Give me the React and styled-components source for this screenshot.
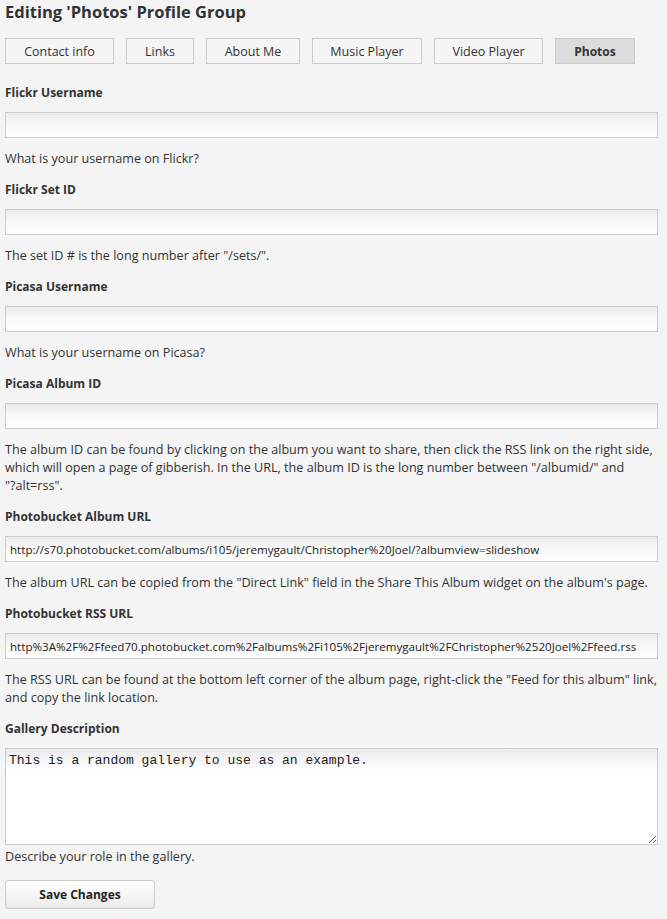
import React from "react";
import styled, { createGlobalStyle } from "styled-components";

const Global = createGlobalStyle`
  html, body { margin: 0; padding: 0; background: #f4f4f4; }
  body { font-family: "Open Sans", "Noto Sans", sans-serif; color: #333; }
`;

const Page = styled.div`
  padding: 2px 9px 20px 5px;
  display: flex;
  flex-direction: column;
`;

const Title = styled.h1`
  margin: 0;
  font-size: 16.5px;
  line-height: 20px;
  font-weight: 700;
  color: #333;
`;

const Tabs = styled.div`
  display: flex;
  gap: 12px;
  margin-top: 16px;
`;

const Tab = styled.button`
  box-sizing: border-box;
  height: 26px;
  padding: 0;
  width: ${(p) => p.$w}px;
  border: 1px solid #cccccc;
  background: ${(p) => (p.$active ? "#dcdcdc" : "#f5f5f5")};
  font-family: inherit;
  font-size: ${(p) => (p.$active ? 12 : 12.5)}px;
  font-weight: ${(p) => (p.$active ? 700 : 400)};
  color: #333;
`;

const Field = styled.div`
  display: flex;
  flex-direction: column;
  margin-top: ${(p) => p.$top}px;
`;

const Label = styled.label`
  font-size: 12px;
  font-weight: 700;
  line-height: 18px;
  margin-bottom: 10px;
`;

const Input = styled.input`
  box-sizing: border-box;
  height: 26px;
  width: 100%;
  margin: 0;
  border: 1px solid #cccccc;
  background: linear-gradient(#ebebeb, #f8f8f8 45%, #ffffff);
  padding: 0 4px;
  font-family: inherit;
  font-size: 11.6px;
  color: #222;
  outline: none;
`;

const TextArea = styled.textarea`
  box-sizing: border-box;
  height: 97px;
  width: 100%;
  margin: 0;
  border: 1px solid #cccccc;
  background: linear-gradient(#ebebeb, #ffffff 22px);
  padding: 4px 3px;
  font-family: "Liberation Mono", "DejaVu Sans Mono", monospace;
  font-size: 13px;
  line-height: 16px;
  color: #222;
  resize: vertical;
  outline: none;
  display: block;
`;

const Help = styled.p`
  margin: ${(p) => p.$top ?? 12}px 0 0;
  font-size: 12.6px;
  line-height: 18px;
  color: #333;
`;

const NoWrap = styled.span`
  white-space: nowrap;
`;

const Save = styled.button`
  box-sizing: border-box;
  margin-top: 14px;
  width: 150px;
  height: 29px;
  border: 1px solid #cccccc;
  border-radius: 3px;
  background: linear-gradient(#ffffff, #ebebeb);
  font-family: inherit;
  font-size: 12px;
  font-weight: 700;
  color: #222;
  align-self: flex-start;
`;

const tabs = [
  ["Contact info", 109],
  ["Links", 68],
  ["About Me", 94],
  ["Music Player", 110],
  ["Video Player", 109],
  ["Photos", 80, true],
];

const fields = [
  { label: "Flickr Username", help: "What is your username on Flickr?" },
  { label: "Flickr Set ID", help: 'The set ID # is the long number after "/sets/".' },
  { label: "Picasa Username", help: "What is your username on Picasa?" },
  {
    label: "Picasa Album ID",
    help: (
      <>
        The album ID can be found by clicking on the album you want to share, then click the RSS link on the right
        side, which will open a page of gibberish. In the URL, the album ID is the long number between "/albumid/" and{" "}
        <NoWrap>"?alt=rss".</NoWrap>
      </>
    ),
  },
  {
    label: "Photobucket Album URL",
    value: "http://s70.photobucket.com/albums/i105/jeremygault/Christopher%20Joel/?albumview=slideshow",
    help: 'The album URL can be copied from the "Direct Link" field in the Share This Album widget on the album\'s page.',
  },
  {
    label: "Photobucket RSS URL",
    value: "http%3A%2F%2Ffeed70.photobucket.com%2Falbums%2Fi105%2Fjeremygault%2FChristopher%2520Joel%2Ffeed.rss",
    help: 'The RSS URL can be found at the bottom left corner of the album page, right-click the "Feed for this album" link, and copy the link location.',
  },
];

export default function App() {
  return (
    <>
      <Global />
      <Page>
        <Title>Editing 'Photos' Profile Group</Title>
        <Tabs>
          {tabs.map(([t, w, a]) => (
            <Tab key={t} $w={w} $active={a}>
              {t}
            </Tab>
          ))}
        </Tabs>
        {fields.map((f, i) => (
          <Field key={f.label} $top={i === 0 ? 20 : 13}>
            <Label>{f.label}</Label>
            <Input defaultValue={f.value || ""} />
            <Help>{f.help}</Help>
          </Field>
        ))}
        <Field $top={13}>
          <Label>Gallery Description</Label>
          <TextArea defaultValue="This is a random gallery to use as an example." />
          <Help $top={3}>Describe your role in the gallery.</Help>
        </Field>
        <Save>Save Changes</Save>
      </Page>
    </>
  );
}
